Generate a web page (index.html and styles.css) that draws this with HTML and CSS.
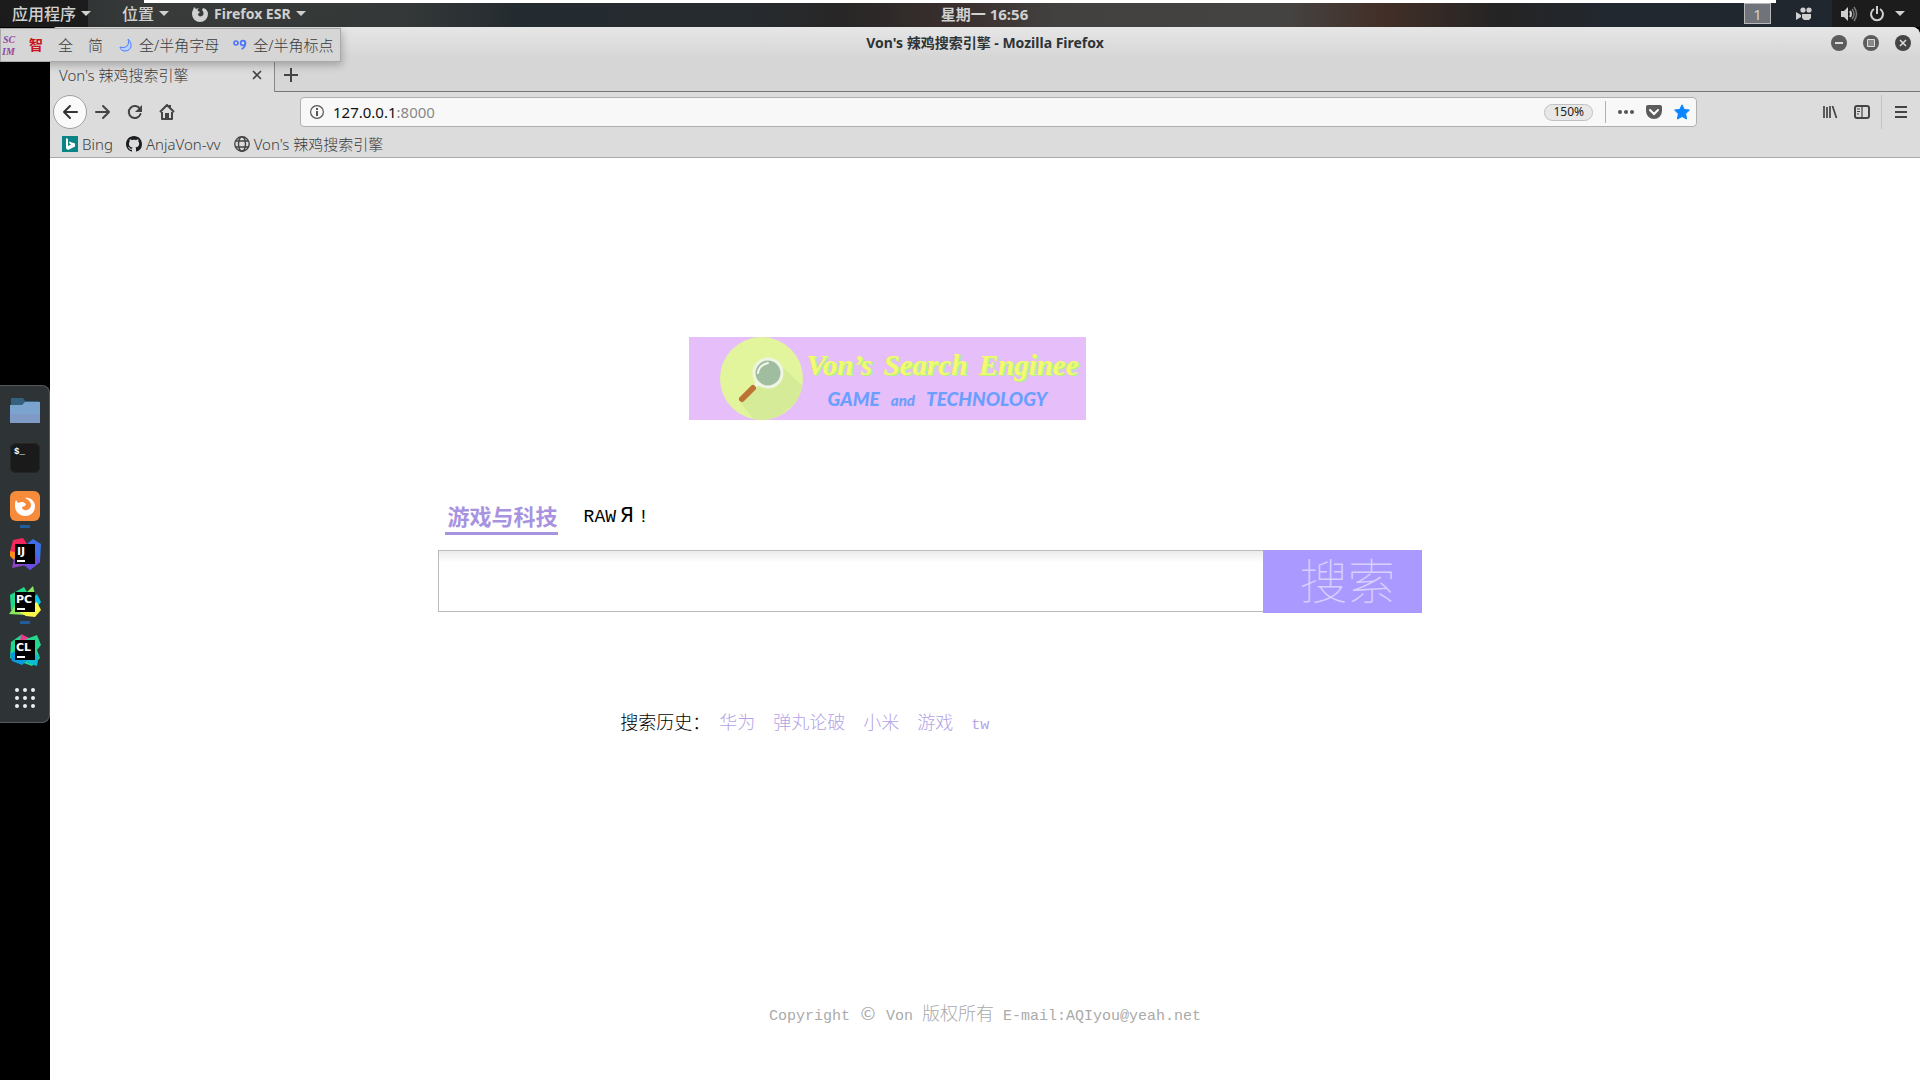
FILE: index.html
```html
<!DOCTYPE html>
<html lang="zh-CN">
<head>
    <meta charset="UTF-8">
    <meta name="viewport" content="width=device-width, initial-scale=1.0">
    <title>Von's 辣鸡搜索引擎</title>
    <link rel="stylesheet" href="styles.css">
</head>
<body>
    <!-- 顶栏 -->
    <header class="panel">
        <div class="panel-left">
            <button class="panel-btn apps">应用程序<span class="caret"></span></button>
            <button class="panel-btn places">位置<span class="caret"></span></button>
            <button class="panel-btn">
                <svg class="ff" width="16" height="16" viewBox="0 0 16 16"><path fill="#d0d0d0" d="M1 4 2 1l2 2c2-1 3-1 3-1-1 1-2 2-1 3l2 1-2 2c0 2 2 3 4 2 2-1 2-4 0-6l1-2c4 1 5 4 5 6a8 8 0 0 1-16 0c0-2 .4-3 1-4z"/></svg>
                Firefox ESR<span class="caret"></span>
            </button>
        </div>
        <div class="clock">星期一 16:56</div>
        <div class="panel-right">
            <button class="workspace">1</button>
            <svg class="cam" width="16" height="14" viewBox="0 0 16 14"><g fill="#d0d0d0"><circle cx="7" cy="3" r="2.600"/><circle cx="13" cy="3" r="2.600"/><path d="M0 5l5 3v2l-5 3zM6 7h9v4l-2 2H8l-2-2z"/></g></svg>
            <svg class="vol" width="18" height="16" viewBox="0 0 18 16"><path fill="#d0d0d0" d="M1 5h3l4-4v14l-4-4H1z"/><path d="M10 5q2 3 0 6" fill="none" stroke="#d0d0d0" stroke-width="2"/><path d="M12 3q4 5 0 10M14 1q5 7 0 14" fill="none" stroke="#777" stroke-width="1.5"/></svg>
            <svg class="power" width="16" height="16" viewBox="0 0 16 16"><path d="M5 3a6 6 0 1 0 6 0M8 0v8" fill="none" stroke="#d0d0d0" stroke-width="2"/></svg>
            <span class="caret"></span>
        </div>
    </header>

    <!-- 输入法工具条 -->
    <div class="scim">
        <svg class="scim-logo" width="18" height="26" viewBox="0 0 18 26"><defs><linearGradient id="sc" x1="0" y1="0" x2="1" y2="1"><stop offset="0" stop-color="#5a50c8"/><stop offset="1" stop-color="#c83c78"/></linearGradient></defs><text class="scim-text" x="1" y="11" fill="url(#sc)">SC</text><text class="scim-text" x="0" y="23" fill="url(#sc)">IM</text></svg>
        <button class="scim-btn zhi">智</button>
        <button class="scim-btn full">全</button>
        <button class="scim-btn simp">简</button>
        <button class="scim-btn"><svg width="14" height="14" viewBox="0 0 14 14"><path d="M9 1c5 4 4 12-3 12-3 0-5-2-5-4 6 2 10-2 8-8z" fill="#b9d0ff" stroke="#4c7dff"/></svg>全/半角字母</button>
        <button class="scim-btn punct"><svg width="14" height="14" viewBox="0 0 14 14"><g fill="none" stroke="#4c74ff" stroke-width="1.6"><circle cx="3" cy="5" r="2"/><circle cx="10" cy="5" r="2.4"/><path d="M12.500 4c0 4-1 6-4 7"/></g></svg>全/半角标点</button>
    </div>

    <div class="desktop">
        <aside class="dock-strip">
            <nav class="dock">
                <button class="dock-btn"><svg width="30" height="30" viewBox="0 0 30 30"><path fill="#34617f" d="M1 3h12l2 3h14v8H1z"/><path fill="#7aa3cd" d="M0 10h12l3-3h15v21H0z"/><path fill="#8394c2" opacity=".6" d="M0 19h30v9H0z"/></svg></button>
                <button class="dock-btn"><svg width="30" height="30" viewBox="0 0 30 30"><rect width="30" height="30" rx="6" fill="#1a1a1a"/><rect x=".5" y=".5" width="29" height="29" rx="6" fill="none" stroke="#262626"/><text class="term" x="4" y="11">$_</text></svg></button>
                <button class="dock-btn running"><svg width="30" height="30" viewBox="0 0 30 30"><rect width="30" height="30" rx="6" fill="#f68b3c"/><path fill="#fff" d="M6 9l2 3c2-1 3-1 5-1l3 2-1 2-3 1c0 2 2 4 5 3 4-1 5-5 3-8-1-2-3-3-5-4 6-1 10 4 10 8 0 6-4 10-10 10S5 20 5 15c0-3 0-4 1-6z"/></svg></button>
                <button class="dock-btn"><svg width="32" height="32" viewBox="0 0 32 32"><path fill="#f5265c" d="M4 2l10-2 6 9-8 14-11-9z"/><path fill="#ff8a1e" d="M1 13l9 2-4 8-5-5z"/><path fill="#8e44c8" d="M5 21l-2 9 14-3V14z"/><path fill="#3c6fe6" d="M19 5l5-4 8 5-1 18-10 8-6-7z"/><path fill="#6b4be0" d="M15 27l9-15 7 12-10 8z"/><path d="M6 6h20v20H6z"/><text class="jb" x="8" y="17">IJ</text><path fill="#fff" d="M8 22h8v2H8z"/></svg></button>
                <button class="dock-btn running"><svg width="32" height="32" viewBox="0 0 32 32"><path fill="#21d789" d="M1 9L15 1l6 10-9 14-10-1z"/><path fill="#86e85a" d="M18 6l6-6 3 12zM0 28l8-11 8 12z"/><path fill="#07c3f2" d="M25 12l3-4 4 8-6 8z"/><path fill="#fcf84a" d="M10 26l18-10 4 8-6 7-9-1z"/><path d="M6 6h20v20H6z"/><text class="jb" x="7" y="17">PC</text><path fill="#fff" d="M8 22h8v2H8z"/></svg></button>
                <button class="dock-btn"><svg width="32" height="32" viewBox="0 0 32 32"><path fill="#22d88f" d="M2 8l10-7 8 3 8-3 4 10-4 5 3 8-8 8-22-8z"/><path fill="#f0348c" d="M12 0l8 4-9 4z"/><path fill="#079ae0" d="M1 20l9-5 8 12-5 4-10-4z"/><path fill="#0bbcd0" d="M16 25l14-5-2 12-9-3z"/><path d="M6 6h20v20H6z"/><text class="jb" x="7" y="17">CL</text><path fill="#fff" d="M8 22h8v2H8z"/></svg></button>
                <button class="dock-btn"><svg width="22" height="22" viewBox="0 0 22 22"><g fill="#eee"><circle cx="3" cy="3" r="2"/><circle cx="11" cy="3" r="2"/><circle cx="19" cy="3" r="2"/><circle cx="3" cy="11" r="2"/><circle cx="11" cy="11" r="2"/><circle cx="19" cy="11" r="2"/><circle cx="3" cy="19" r="2"/><circle cx="11" cy="19" r="2"/><circle cx="19" cy="19" r="2"/></g></svg></button>
            </nav>
        </aside>

        <div class="window">
            <div class="titlebar">
                <div class="title">Von's 辣鸡搜索引擎 - Mozilla Firefox</div>
                <div class="win-btns">
                    <button><svg width="16" height="16" viewBox="0 0 16 16"><circle cx="8" cy="8" r="8" fill="#5c5c5c"/><path fill="#ddd" d="M4 7h8v2H4z"/></svg></button>
                    <button><svg width="16" height="16" viewBox="0 0 16 16"><circle cx="8" cy="8" r="8" fill="#5c5c5c"/><path d="M4.500 4.500h7v7h-7z" fill="#888" stroke="#ddd"/></svg></button>
                    <button><svg width="16" height="16" viewBox="0 0 16 16"><circle cx="8" cy="8" r="8" fill="#444"/><path d="M5 5l6 6M11 5l-6 6" stroke="#ddd" stroke-width="1.5"/></svg></button>
                </div>
            </div>
            <div class="tabs">
                <div class="tab">
                    <span>Von's 辣鸡搜索引擎</span>
                    <button><svg width="10" height="10" viewBox="0 0 10 10"><path d="M1 1l8 8M9 1L1 9" stroke="#444" stroke-width="1.6"/></svg></button>
                </div>
                <div class="tab-rest"><button><svg width="14" height="14" viewBox="0 0 14 14"><path d="M7 0v14M0 7h14" stroke="#444" stroke-width="2"/></svg></button></div>
            </div>
            <div class="toolbar">
                <div class="nav-btns">
                    <button class="back"><svg width="16" height="16" viewBox="0 0 16 16"><path d="M15 8H2M8 2L2 8l6 6" fill="none" stroke="#333" stroke-width="2" stroke-linecap="round" stroke-linejoin="round"/></svg></button>
                    <button><svg width="16" height="16" viewBox="0 0 16 16"><path d="M1 8h13M8 2l6 6-6 6" fill="none" stroke="#444" stroke-width="2" stroke-linecap="round" stroke-linejoin="round"/></svg></button>
                    <button><svg width="16" height="16" viewBox="0 0 16 16"><path d="M13 5a6 6 0 1 0 .5 5" fill="none" stroke="#444" stroke-width="2" stroke-linecap="round"/><path fill="#444" d="M15 1v7H8z"/></svg></button>
                    <button><svg width="16" height="16" viewBox="0 0 16 16"><path d="M1 8l7-7 7 7M3 8v7h10V8M11 1v3" fill="none" stroke="#444" stroke-width="2" stroke-linejoin="round"/><path fill="#444" d="M6 9h4v6H6z"/></svg></button>
                </div>
                <div class="urlbar">
                    <svg width="14" height="14" viewBox="0 0 14 14"><circle cx="7" cy="7" r="6.400" fill="none" stroke="#555" stroke-width="1.200"/><path fill="#555" d="M6 3h2v2H6zM6 6h2v5H6z"/></svg>
                    <div class="url">127.0.0.1<span class="port">:8000</span></div>
                    <button class="zoom">150%</button>
                    <span class="sep"></span>
                    <button><svg width="16" height="16" viewBox="0 0 16 16"><g fill="#555"><circle cx="2" cy="8" r="2"/><circle cx="8" cy="8" r="2"/><circle cx="14" cy="8" r="2"/></g></svg></button>
                    <button><svg width="16" height="16" viewBox="0 0 16 16"><path fill="#5c5c5c" d="M2 1h12a2 2 0 0 1 2 2v4A8 8 0 0 1 0 7V3a2 2 0 0 1 2-2z"/><path d="M4 6l4 4 4-4" fill="none" stroke="#fff" stroke-width="2" stroke-linecap="round"/></svg></button>
                    <button><svg width="16" height="16" viewBox="0 0 16 16"><path fill="#0a84ff" stroke="#0a84ff" stroke-linejoin="round" d="M8 .8l2.200 4.600 5.200.7-3.800 3.600 1 5.300L8 12.500 3.400 15l1-5.300L.6 6.100l5.200-.7z"/></svg></button>
                </div>
                <div class="tools">
                    <button><svg width="16" height="16" viewBox="0 0 16 16"><path d="M2 2v12M5 3v11M8 2v12M10.500 2l4 12" fill="none" stroke="#444" stroke-width="1.700"/></svg></button>
                    <button><svg width="16" height="16" viewBox="0 0 16 16"><rect x="1" y="2" width="14" height="12" rx="2" fill="none" stroke="#444" stroke-width="2"/><path d="M8 2v12M3 5h3M3 7.500h3M3 10h2" stroke="#444" stroke-width="1.200"/></svg></button>
                    <button class="menu"><svg width="14" height="14" viewBox="0 0 14 14"><path d="M1 2h12M1 7h12M1 12h12" stroke="#444" stroke-width="2"/></svg></button>
                </div>
            </div>
            <nav class="bookmarks">
                <a href="#"><svg width="16" height="16" viewBox="0 0 16 16"><path fill="#0a8484" d="M0 0h16v16H0z"/><path fill="#fff" d="M4 2l2 1v7l3-1.500-1.500-1L7 5.500l6 2v3L6 14l-2-1.500z"/></svg>Bing</a>
                <a href="#"><svg width="16" height="16" viewBox="0 0 16 16"><path fill="#1b1f23" d="M8 0C3.580 0 0 3.580 0 8c0 3.540 2.290 6.530 5.470 7.590.4.070.55-.17.55-.38 0-.19-.01-.82-.01-1.490-2.010.37-2.530-.49-2.690-.94-.09-.23-.48-.94-.82-1.130-.28-.15-.68-.52-.01-.53.63-.01 1.080.58 1.230.82.72 1.210 1.870.87 2.330.66.07-.52.28-.87.51-1.070-1.780-.2-3.640-.89-3.640-3.950 0-.87.31-1.590.82-2.150-.08-.2-.36-1.020.08-2.120 0 0 .67-.21 2.200.82.64-.18 1.320-.27 2-.27s1.360.09 2 .27c1.530-1.040 2.200-.82 2.200-.82.44 1.100.16 1.920.08 2.120.51.56.82 1.270.82 2.150 0 3.070-1.870 3.750-3.650 3.950.29.25.54.73.54 1.480 0 1.070-.01 1.930-.01 2.200 0 .21.15.46.55.38A8 8 0 0 0 16 8c0-4.420-3.580-8-8-8z"/></svg>AnjaVon-vv</a>
                <a href="#"><svg width="16" height="16" viewBox="0 0 16 16"><g fill="none" stroke="#444" stroke-width="1.400"><circle cx="8" cy="8" r="7.200"/><ellipse cx="8" cy="8" rx="3.500" ry="7.200"/><path d="M2 5h12M2 11h12"/></g></svg>Von's 辣鸡搜索引擎</a>
            </nav>

            <main class="page">
                <div class="logo">
                    <svg class="glass" width="83" height="83" viewBox="0 0 83 83"><defs><clipPath id="disc"><circle cx="41.500" cy="41.500" r="41.500"/></clipPath></defs><g clip-path="url(#disc)"><path fill="#e2f59c" d="M0 0h83v83H0z"/><path fill="#d5eb98" d="M58 26l30 28-45 40-24-30z"/></g><circle cx="48" cy="36" r="14" fill="#a0bda0" stroke="#eff5e4" stroke-width="3"/><path d="M38 36q1-8 10-10" fill="none" stroke="#f4f8ec" stroke-width="2" stroke-linecap="round"/><path d="M38 46l-4 4" stroke="#eff5e4" stroke-width="4"/><path d="M33 51L22 62" stroke="#bd7433" stroke-width="6" stroke-linecap="round"/></svg>
                    <div class="logo-text">
                        <div class="logo-name"><span>Von’s</span> <span>Search</span> <span>Enginee</span></div>
                        <div class="logo-sub"><span>GAME</span> <span class="and">and</span> <span>TECHNOLOGY</span></div>
                    </div>
                </div>
                <nav class="kinds">
                    <a class="kind active" href="#">游戏与科技</a>
                    <a class="kind raw" href="#">RAW<span class="wide">Я</span>!</a>
                </nav>
                <form class="search">
                    <input type="text" aria-label="搜索">
                    <button type="button">搜索</button>
                </form>
                <div class="history">
                    <span>搜索历史：</span>
                    <a href="#">华为</a>
                    <a href="#">弹丸论破</a>
                    <a href="#">小米</a>
                    <a href="#">游戏</a>
                    <a class="latin" href="#">tw</a>
                </div>
                <footer class="copyright">Copyright <span class="mark">©</span> Von <span class="han">版权所有</span> E-mail:AQIyou@yeah.net</footer>
            </main>
        </div>
    </div>
</body>
</html>
```

FILE: styles.css
```css
* {
    box-sizing: border-box;
}
body {
    margin: 0;
    min-height: 100vh;
    display: flex;
    flex-direction: column;
    background: #000;
    font: 15px/20px "Noto Sans", "Noto Sans CJK SC", sans-serif;
    color: #3c3c3c;
}
button {
    display: flex;
    align-items: center;
    padding: 0;
    border: none;
    background: none;
    font: inherit;
    color: inherit;
    cursor: pointer;
}
a {
    color: inherit;
    text-decoration: none;
}
svg {
    flex: none;
}

/* 顶栏 */
.panel {
    display: grid;
    grid-template-columns: 1fr auto 1fr;
    align-items: center;
    height: 27px;
    padding: 0 15px 0 12px;
    color: #d0d0d0;
    font-weight: bold;
    font-size: 14px;
    background:
        linear-gradient(#fff, #fff) 144px 0 / calc(100% - 288px) 3px no-repeat,
        linear-gradient(90deg, #1c1c1c 88px, transparent 88px, transparent calc(100% - 88px), #1c1c1c calc(100% - 88px)),
        linear-gradient(90deg, #262c30, #383b39 8%, #343838 21%, #242b30 27%, #262b2f 39%, #282626 44%, #3a302e 50%, #424140 55%, #454341 67%, #422f27 72%, #252424 78%, #212830 84%, #20262e);
}
.panel-left,
.panel-right {
    display: flex;
    align-items: center;
}
.panel-right {
    justify-content: flex-end;
}
.caret {
    margin-left: 5px;
    border: 5px solid transparent;
    border-top-color: #d0d0d0;
    border-bottom: none;
}
.apps {
    margin-right: 31px;
    font-size: 16px;
    font-weight: 500;
}
.places {
    margin-right: 23px;
    font-size: 16px;
    font-weight: 500;
}
.ff {
    margin-right: 6px;
}
.clock {
    padding-left: 52px;
    font-size: 15px;
}
.workspace {
    justify-content: center;
    width: 27px;
    height: 21px;
    margin-right: 25px;
    border: 1px solid #b8b8b8;
    background: #70747a;
    font-weight: normal;
    font-size: 15px;
}
.cam {
    margin-right: 28px;
}
.vol {
    margin-right: 11px;
}
.power {
    margin-right: 5px;
}

/* 输入法工具条，浮在窗口上面 */
.scim {
    position: absolute;
    z-index: 2;
    top: 28px;
    left: 0;
    display: flex;
    align-items: center;
    height: 34px;
    padding: 0 7px 0 1px;
    border: 1px solid #aaa;
    background: #d6d6d6;
    box-shadow: 1px 3px 8px rgba(0, 0, 0, 0.25);
    font-weight: 300;
}
.scim-text {
    font: italic bold 10px "Liberation Serif", serif;
}
.scim-btn {
    gap: 6px;
    white-space: nowrap;
}
.zhi {
    margin: 0 15px 0 9px;
    color: #c8141c;
    font-weight: bold;
    font-size: 14px;
}
.full {
    margin-right: 15px;
}
.simp {
    margin-right: 16px;
}
.punct {
    margin-left: 14px;
}

.desktop {
    flex: 1;
    display: flex;
}

/* 左侧 dock */
.dock-strip {
    flex: none;
    width: 50px;
    display: flex;
    align-items: center;
}
.dock {
    display: flex;
    flex-direction: column;
    width: 50px;
    border: 1px solid #565a5a;
    border-left: none;
    border-radius: 0 8px 8px 0;
    background: #2e3436;
}
.dock-btn {
    justify-content: center;
    height: 48px;
}
.running {
    background: linear-gradient(#215d9c, #215d9c) center bottom 2px / 10px 3px no-repeat;
}
.term {
    font: bold 9px "Liberation Mono", monospace;
    fill: #fff;
}
.jb {
    font: bold 11px "DejaVu Sans", sans-serif;
    fill: #fff;
}

/* 浏览器窗口 */
.window {
    flex: 1;
    min-width: 0;
    display: flex;
    flex-direction: column;
    border-radius: 8px 8px 0 0;
    overflow: hidden;
    background: #dcdcdc;
}
.titlebar {
    display: flex;
    align-items: center;
    height: 31px;
    padding: 0 9px;
    background: linear-gradient(#e6e6e6, #d6d6d6);
}
.title {
    flex: 1;
    padding-left: 98px;
    text-align: center;
    font-weight: bold;
    font-size: 14px;
    color: #2e3436;
}
.win-btns {
    display: flex;
    gap: 16px;
    justify-content: flex-end;
    width: 98px;
}
.tabs {
    display: flex;
    height: 34px;
}
.tab {
    display: flex;
    align-items: center;
    justify-content: space-between;
    width: 225px;
    padding: 0 12px 0 9px;
    border-right: 1px solid #888;
    font-weight: 300;
}
.tab-rest {
    flex: 1;
    display: flex;
    align-items: center;
    padding-left: 9px;
    border-bottom: 1px solid #777;
    background: #d6d6d6;
}
.toolbar {
    display: flex;
    align-items: center;
    gap: 116px;
    height: 40px;
}
.nav-btns {
    display: flex;
    align-items: center;
    gap: 16px;
    padding: 0 9px 0 3px;
}
.back {
    justify-content: center;
    width: 34px;
    height: 34px;
    margin-right: -8px;
    border: 1px solid #a0a0a0;
    border-radius: 50%;
    background: #fafafa;
}
.urlbar {
    flex: 1;
    display: flex;
    align-items: center;
    gap: 12px;
    height: 30px;
    padding: 0 6px 0 9px;
    border: 1px solid #b0b0b0;
    border-radius: 4px;
    background: #f8f8f8;
}
.url {
    flex: 1;
    margin-left: -3px;
    color: #111;
}
.port {
    color: #888;
}
.zoom {
    padding: 0 8px;
    height: 17px;
    border: 1px solid #c0c0c0;
    border-radius: 9px;
    background: #e8e8e8;
    color: #222;
    font-size: 12px;
}
.sep {
    width: 1px;
    height: 22px;
    background: #b0b0b0;
}
.tools {
    display: flex;
    align-items: center;
    gap: 16px;
    padding: 0 12px 0 9px;
}
.menu {
    height: 34px;
    padding-left: 12px;
    margin-left: -5px;
    border-left: 1px solid #c2c2c2;
}
.bookmarks {
    display: flex;
    align-items: center;
    gap: 13px;
    height: 26px;
    padding: 0 12px 2px;
    border-bottom: 1px solid #aaa;
    font-weight: 300;
}
.bookmarks a {
    display: flex;
    align-items: center;
    gap: 4px;
}

/* 网页内容 */
.page {
    flex: 1;
    display: flex;
    flex-direction: column;
    padding-top: 179px;
    background: #fff;
    font: 18px/24px "Noto Sans CJK SC", sans-serif;
    font-weight: 300;
    color: #000;
}
.logo {
    display: flex;
    align-self: flex-start;
    width: 397px;
    height: 83px;
    margin-left: 34.15%;
    padding: 0 7px 0 31px;
    background: #e6bef9;
}
.logo-text {
    flex: 1;
    padding: 10px 0 0 4px;
}
.logo-name {
    display: flex;
    justify-content: space-between;
    font: italic bold 29px/36px "Liberation Serif", serif;
    color: #f2fa70;
    text-shadow: 2px 1px 0 #b4f47c;
}
.logo-sub {
    display: flex;
    align-items: baseline;
    gap: 11px;
    padding: 4px 0 0 21px;
    font: italic 900 19px/24px Lato, sans-serif;
    color: #6a9fff;
}
.and {
    font-size: 15px;
}
.kinds {
    display: flex;
    align-items: flex-start;
    gap: 26px;
    margin: 81px 0 0 21.1%;
}
.kind {
    line-height: 32px;
}
.active {
    padding: 0 0 3px 3px;
    border-bottom: 3px solid #a893e0;
    line-height: 28px;
    color: #a893e0;
    font-size: 22px;
    font-weight: bold;
}
.raw {
    font-family: "Liberation Mono", monospace;
    font-weight: normal;
}
.wide {
    display: inline-block;
    width: 22px;
    text-align: center;
    font-size: 22px;
}
.search {
    display: flex;
    align-items: flex-start;
    width: 52.6%;
    margin: 15px 0 0 20.75%;
}
.search input {
    flex: 1;
    min-width: 0;
    height: 62px;
    padding: 0 12px;
    border: 1px solid #bbb;
    border-right: none;
    background: linear-gradient(#ececec, #fff 12px);
    font: inherit;
    outline: none;
}
.search button {
    height: 63px;
    padding: 0 26px 8px 37px;
    background: #aa9aff;
    color: #d8d0ff;
    font-size: 48px;
    font-weight: 100;
}
.history {
    display: flex;
    align-items: baseline;
    gap: 18px;
    margin: 96px 0 0 30.5%;
}
.history span {
    margin-right: -9px;
}
.history a {
    color: #b3a3e6;
}
.history .latin {
    font-family: "Liberation Mono", monospace;
    font-size: 15px;
}
.copyright {
    margin-top: auto;
    padding: 0 0 51px;
    text-align: center;
    font-family: "Liberation Mono", monospace;
    font-size: 15px;
    color: #aaa;
}
.mark {
    display: inline-block;
    width: 18px;
    font: 18px "Noto Sans CJK SC", sans-serif;
}
.han {
    font: 300 18px "Noto Sans CJK SC", sans-serif;
}
```
